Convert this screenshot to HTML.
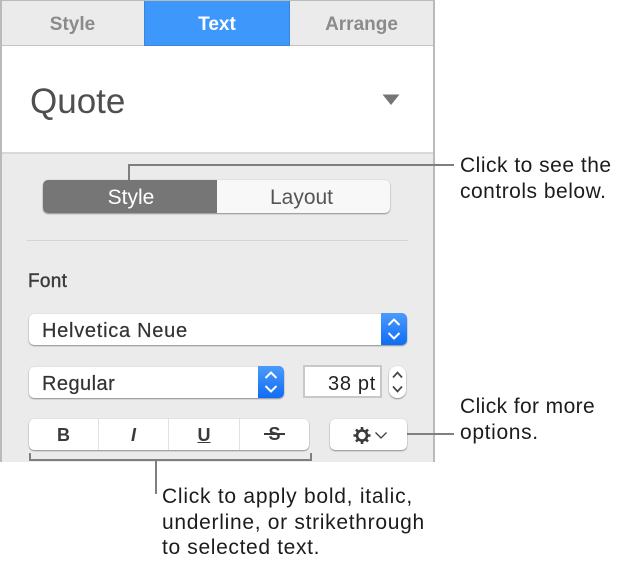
<!DOCTYPE html>
<html><head><meta charset="utf-8">
<style>
html,body{margin:0;padding:0;background:#fff}
#r{position:relative;width:618px;height:564px;overflow:hidden;background:#fff;font-family:"Liberation Sans",sans-serif}
#r div{position:absolute;box-sizing:border-box}
.t{white-space:nowrap;line-height:24px}
.c{font-size:21px;color:#1c1c1c;white-space:nowrap;height:26px;line-height:26px}
.ln{background:#7f7f7f}
.btn{background:#fff;border-radius:5px;box-shadow:0 1px 1.5px rgba(0,0,0,.38),0 0 1px rgba(0,0,0,.2)}
.blue{background:linear-gradient(#4b9bfb,#0f6cf5);border-radius:0 5px 5px 0}
</style></head><body>
<div id="r">
<div style="left:0;top:0;width:435px;height:462px;background:#ebebeb;border:2px solid #bababa;border-bottom:0;border-right-width:2px;border-top-width:1px"></div>
<div style="left:2px;top:45px;width:431px;height:1px;background:#c4c4c4"></div>
<div style="left:2px;top:46px;width:431px;height:108px;background:#fff;border-bottom:2px solid #d9d9d9"></div>
<div style="left:144px;top:1px;width:146px;height:45px;background:#3e97fb;border:1px solid #3a84dc;border-top:0"></div>
<div class="t" style="left:1px;top:13px;width:143px;text-align:center;font-size:19px;font-weight:bold;color:#8b8b8b">Style</div>
<div class="t" style="left:144px;top:13px;width:146px;text-align:center;font-size:19px;font-weight:bold;color:#fff">Text</div>
<div class="t" style="left:290px;top:13px;width:143px;text-align:center;font-size:19px;font-weight:bold;color:#8b8b8b">Arrange</div>
<div class="t" style="left:30px;top:90px;font-size:35px;color:#4f4f4f">Quote</div>
<svg style="position:absolute;left:382px;top:94px" width="18" height="12"><path d="M0.5 0.5H17.500L9 11Z" fill="#757575"/></svg>

<div class="btn" style="left:43px;top:180px;width:347px;height:33px;background:#f8f8f8"></div>
<div style="left:43px;top:180px;width:174px;height:33px;background:#767676;border-radius:5px 0 0 5px"></div>
<div class="t" style="left:44px;top:186px;width:174px;text-align:center;font-size:21px;color:#fff">Style</div>
<div class="t" style="left:215px;top:186px;width:173px;text-align:center;font-size:21px;color:#555">Layout</div>
<div style="left:27px;top:240px;width:381px;height:1px;background:#d4d4d4"></div>

<div class="t" style="left:28px;top:270px;font-size:19px;letter-spacing:.3px;color:#3b3b3b;-webkit-text-stroke:.4px #3b3b3b">Font</div>

<div class="btn" style="left:29px;top:314px;width:378px;height:31px"></div>
<div class="blue" style="left:381px;top:313px;width:26px;height:32px"></div>
<div class="t" style="left:42px;top:319px;font-size:20px;color:#333;letter-spacing:.73px;-webkit-text-stroke:.2px #333">Helvetica Neue</div>
<svg style="position:absolute;left:381px;top:313px" width="26" height="32" fill="none" stroke="#fff" stroke-width="2"><path d="M7.500 12L13 6.500L18.500 12M7.500 20L13 25.500L18.500 20"/></svg>

<div class="btn" style="left:29px;top:367px;width:255px;height:31px"></div>
<div class="blue" style="left:258px;top:366px;width:26px;height:32px"></div>
<div class="t" style="left:42px;top:372px;font-size:20px;color:#333;letter-spacing:.45px;-webkit-text-stroke:.2px #333">Regular</div>
<svg style="position:absolute;left:258px;top:366px" width="26" height="32" fill="none" stroke="#fff" stroke-width="2"><path d="M7.500 12L13 6.500L18.500 12M7.500 20L13 25.500L18.500 20"/></svg>

<div style="left:303px;top:365px;width:79px;height:33px;background:#fff;border:2px solid #c8c8c8"></div>
<div class="t" style="left:303px;top:372px;width:73px;text-align:right;font-size:20px;color:#222;letter-spacing:.7px">38 pt</div>
<div class="btn" style="left:389px;top:366px;width:17px;height:32px;border-radius:8px"></div>
<svg style="position:absolute;left:389px;top:366px" width="17" height="32" fill="none" stroke="#444" stroke-width="1.700"><path d="M4 11.500L8.500 6.500L13 11.500M4 20.500L8.500 25.500L13 20.500"/></svg>

<div class="btn" style="left:29px;top:419px;width:280px;height:31px"></div>
<div style="left:98px;top:419px;width:1px;height:31px;background:#e2e2e2"></div>
<div style="left:168px;top:419px;width:1px;height:31px;background:#e2e2e2"></div>
<div style="left:239px;top:419px;width:1px;height:31px;background:#e2e2e2"></div>
<div class="t" style="left:29px;top:423px;width:69px;text-align:center;font-size:18px;font-weight:bold;color:#3a3a3a">B</div>
<div class="t" style="left:99px;top:423px;width:69px;text-align:center;font-size:18px;font-weight:bold;font-style:italic;color:#3a3a3a">I</div>
<div class="t" style="left:169px;top:423px;width:70px;text-align:center;font-size:18px;font-weight:bold;color:#3a3a3a;text-decoration:underline">U</div>
<div class="t" style="left:240px;top:422px;width:69px;text-align:center;font-size:18px;font-weight:bold;color:#3a3a3a">S</div>
<div style="left:264px;top:433px;width:21px;height:2px;background:#3a3a3a"></div>

<div class="btn" style="left:330px;top:419px;width:77px;height:31px"></div>
<svg style="position:absolute;left:353px;top:424px" width="36" height="24" fill="none" stroke="#3a3a3a"><circle cx="9" cy="11.500" r="5" stroke-width="2.600"/><path d="M9 3V6M9 17V20M0.500 11.500H3.500M14.500 11.500H17.500M3 5.500L5.100 7.600M12.900 15.400L15 17.500M15 5.500L12.900 7.600M5.100 15.400L3 17.500" stroke-width="2.600"/><path d="M22.500 8.500L28 14L33.500 8.500" stroke-width="1.300"/></svg>

<!-- callout lines -->
<div class="ln" style="left:128px;top:164px;width:2px;height:16px"></div>
<div class="ln" style="left:128px;top:164px;width:326px;height:2px"></div>
<div class="ln" style="left:407px;top:433px;width:47px;height:2px"></div>
<div class="ln" style="left:29px;top:459px;width:283px;height:2px"></div>
<div class="ln" style="left:29px;top:453px;width:2px;height:8px"></div>
<div class="ln" style="left:310px;top:453px;width:2px;height:8px"></div>
<div class="ln" style="left:155px;top:461px;width:2px;height:33px"></div>

<div class="c" style="left:460px;top:153px;letter-spacing:.5px">Click to see the</div>
<div class="c" style="left:460px;top:179px;letter-spacing:.5px">controls below.</div>
<div class="c" style="left:460px;top:394px;letter-spacing:.4px">Click for more</div>
<div class="c" style="left:460px;top:420px;letter-spacing:.65px">options.</div>
<div class="c" style="left:162px;top:484px;letter-spacing:.75px">Click to apply bold, italic,</div>
<div class="c" style="left:162px;top:510px;letter-spacing:.7px">underline, or strikethrough</div>
<div class="c" style="left:162px;top:535px;letter-spacing:.65px">to selected text.</div>
</div>
</body></html>
